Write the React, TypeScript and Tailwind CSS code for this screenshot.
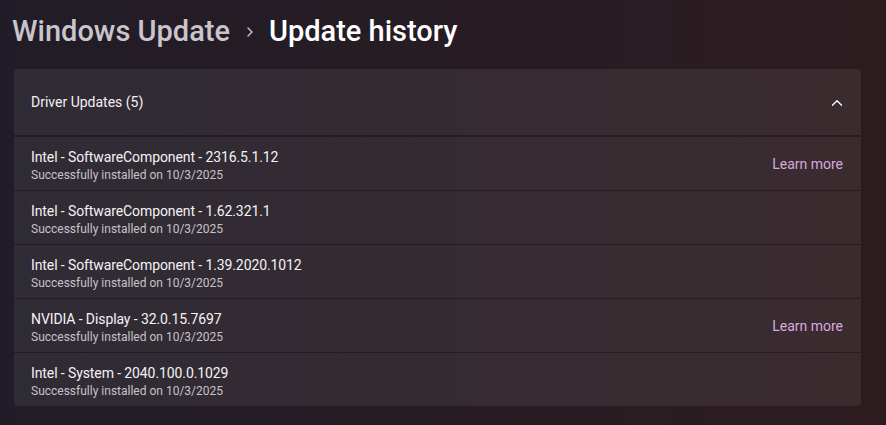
import { ChevronRight, ChevronUp } from "lucide-react";

interface UpdateItem {
  name: string;
  date: string;
  learnMore?: boolean;
}

const updates: UpdateItem[] = [
  { name: "Intel - SoftwareComponent - 2316.5.1.12", date: "10/3/2025", learnMore: true },
  { name: "Intel - SoftwareComponent - 1.62.321.1", date: "10/3/2025" },
  { name: "Intel - SoftwareComponent - 1.39.2020.1012", date: "10/3/2025" },
  { name: "NVIDIA - Display - 32.0.15.7697", date: "10/3/2025", learnMore: true },
  { name: "Intel - System - 2040.100.0.1029", date: "10/3/2025" },
];

const UpdateRow = ({ item, last }: { item: UpdateItem; last: boolean }) => (
  <div
    className={`flex h-[53px] items-center justify-between bg-white/[0.065] pl-[17px] pr-[18px] ${
      last ? "rounded-b-[4px]" : ""
    }`}
  >
    <div className="flex flex-col pt-[3px]">
      <span className="text-[14px] leading-[20px] tracking-[-0.1px] text-[#f5f2f5]">{item.name}</span>
      <span className="text-[12px] leading-[16px] text-[#c9c2c8]">
        Successfully installed on {item.date}
      </span>
    </div>
    {item.learnMore && <span className="pt-[2px] text-[14px] text-[#dba8dc]">Learn more</span>}
  </div>
);

export default function App() {
  return (
    <div
      className="h-[425px] w-[886px] overflow-hidden bg-gradient-to-r from-[#211c27] to-[#2c1c20] pl-[14px] pr-[25px]"
      style={{ fontFamily: 'Roboto, "Noto Sans", sans-serif' }}
    >
      <div className="flex h-[64px] items-center">
        <h1 className="-ml-[2px] flex items-center text-[29px] font-medium">
          <span className="text-[#c9c5cb]">Windows Update</span>
          <ChevronRight className="ml-[12px] mr-[11px] h-[16px] w-[16px] text-[#c9c5cb]" strokeWidth={2} />
          <span className="text-white">Update history</span>
        </h1>
      </div>

      <div className="mt-[5px] flex flex-col">
        <div className="flex h-[66px] items-center justify-between rounded-t-[4px] bg-white/[0.065] pl-[17px] pr-[15px] pt-[1px]">
          <span className="text-[14px] text-[#f3f0f3]">Driver Updates (5)</span>
          <ChevronUp className="h-[18px] w-[18px] text-white" strokeWidth={1.75} />
        </div>
        <div className="mt-[2px] flex flex-col gap-[1px]">
          {updates.map((u, i) => (
            <UpdateRow key={u.name} item={u} last={i === updates.length - 1} />
          ))}
        </div>
      </div>
    </div>
  );
}
